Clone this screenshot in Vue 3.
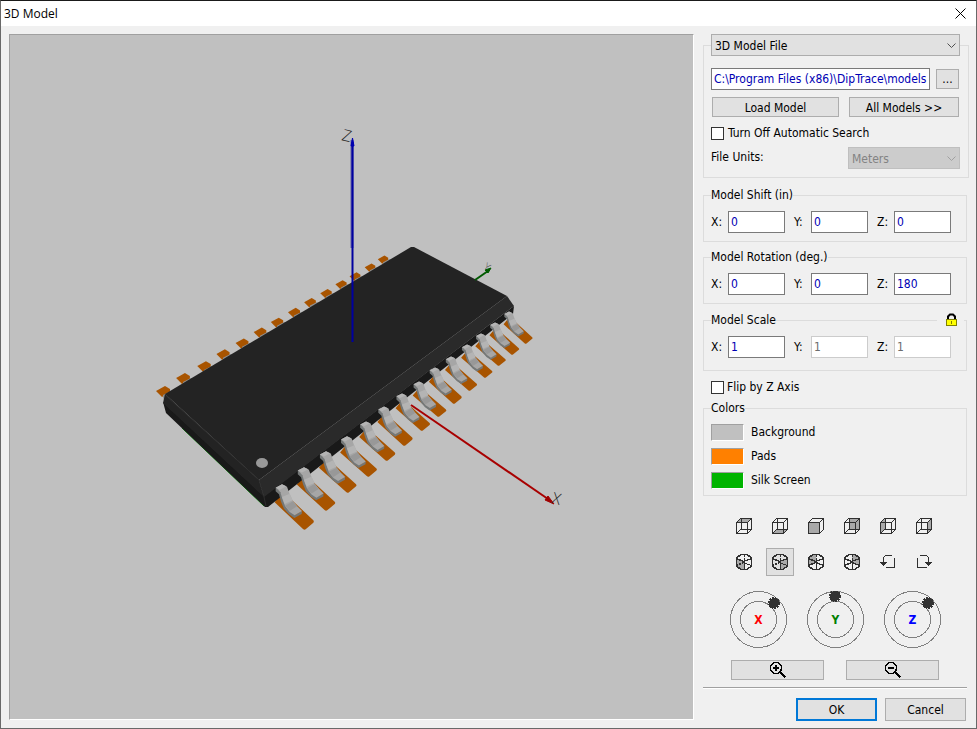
<script setup>
import { ref, reactive } from 'vue'

const source = ref('file')
const path = ref('C:\\Program Files (x86)\\DipTrace\\models3d\\so-28.wrl')
const noSearch = ref(false)
const units = ref('m')
const flipZ = ref(false)
const view = ref('iso-right')

const groups = reactive([
  { id: 'shift', title: 'Model Shift (in)', locked: false, values: { X: '0', Y: '0', Z: '0' } },
  { id: 'rotation', title: 'Model Rotation (deg.)', locked: false, values: { X: '0', Y: '0', Z: '180' } },
  { id: 'scale', title: 'Model Scale', locked: true, values: { X: '1', Y: '1', Z: '1' } },
])

const colors = [
  { name: 'Background', key: 'bg' },
  { name: 'Pads', key: 'pads' },
  { name: 'Silk Screen', key: 'silk' },
]

// Wireframe box seen from the front, one face shaded
const boxLines = 'M.5 4.5H11.5V15.5H.5ZM.5 4.5L4.5 .5H15.5L11.5 4.5M15.5 .5V11.5L11.5 15.5'
const boxHidden = 'M5.5 .5V11.5H15.5M4.5 11.5L.5 15.5'
const isoLines = 'M.5 3.5L5.5 .5H10.5L15.5 3.5V12.5L10.5 15.5H5.5L.5 12.5ZM.5 4.5L7.5 7.5L15.5 4.5M8.5 7V15.5'
const isoHidden = 'M.5 11.5L7.5 8.5L15.5 11.5'
const isoBack = 'M8.5 .5V9'

const views = [
  { id: 'top', face: '.5,4.5 4.5,.5 15.5,.5 11.5,4.5', lines: boxLines + boxHidden },
  { id: 'bottom', face: '.5,15.5 4.5,11.5 15.5,11.5 11.5,15.5', lines: boxLines + boxHidden },
  { id: 'front', face: '.5,4.5 11.5,4.5 11.5,15.5 .5,15.5', lines: boxLines },
  { id: 'back', face: '5.5,.5 15.5,.5 15.5,11.5 5.5,11.5', lines: boxLines + boxHidden },
  { id: 'left', face: '.5,4.5 5.5,.5 5.5,11.5 .5,15.5', lines: boxLines + boxHidden },
  { id: 'right', face: '11.5,4.5 15.5,.5 15.5,11.5 11.5,15.5', lines: boxLines + boxHidden },
  { id: 'iso-left', face: '.5,4.5 8,7.5 8,15.5 5.5,15.5 .5,12.5', lines: isoLines, back: true },
  { id: 'iso-right', face: '8,7.5 15.5,4.5 15.5,12.5 10.5,15.5 8,15.5', lines: isoLines, back: true },
  { id: 'iso-back-left', face: '.5,3.5 5.5,.5 8,.5 8,8.5 .5,11.5', lines: isoLines + isoHidden, back: true },
  { id: 'iso-back-right', face: '8,.5 10.5,.5 15.5,3.5 15.5,11.5 8,8.5', lines: isoLines + isoHidden, back: true },
]

const dials = [
  { axis: 'X', x: 44, y: 12 },
  { axis: 'Y', x: 28, y: 5 },
  { axis: 'Z', x: 44, y: 12 },
]

// Near side pins, nearest first: x and y of the lead top, y of the pad tip
const pins = [
  [282, 485, 530], [304, 468, 511], [326, 452, 493], [347, 437, 477],
  [366, 422, 461], [384, 407, 446], [402, 394, 431], [419, 382, 417],
  [435, 368, 404], [451, 357, 391], [467, 345, 378], [481, 334, 366],
  [495, 323, 355], [509, 312, 344],
]

const nearPads = pins.map(
  ([x, y, tip], i) => `translate(${x} ${y}) scale(${(1 - i * 0.02) / 3} ${(tip - y) / 135})`
)
const leads = pins
  .map(([x, y], i) => `translate(${x} ${y}) scale(${(1 - i * 0.02) / 3})`)
  .reverse()

// Far side pads, only their ends are visible
const farPads = [
  [163, 392], [183, 379], [204, 367], [223, 355], [242, 344], [260, 333], [277, 323],
  [294, 313], [310, 303], [326, 294], [341, 285], [355, 277], [370, 268], [383, 260],
].map(([x, y], i) => `translate(${x} ${y}) scale(${1 - i * 0.02})`)
</script>

<template>
  <div class="dialog">
    <header class="titlebar">
      <span>3D Model</span>
      <button class="close" aria-label="Close">
        <svg width="11" height="11" viewBox="0 0 11 11"><path d="M.5 .5L10.5 10.5M10.5 .5L.5 10.5" /></svg>
      </button>
    </header>

    <div class="content">
      <main class="canvas">
        <svg class="scene" viewBox="10 35 683 684">
          <g v-for="t in farPads" :key="t" :transform="t">
            <path class="pad" d="M-7 -1L2 -6L7 -3L7 0L-1 5Z" />
            <path class="far-lead" d="M0 5V3L8 -1H11V2L1 8Z" />
          </g>
          <path class="silk" d="M182 428L264 506" />
          <g v-for="t in nearPads" :key="t" :transform="t">
            <path class="pad" d="M-22 52L63 132Q67 136 71 133L94 113Q97 110 94 106L3 20Z" />
          </g>

          <path class="lower" d="M163 402L264 496L514 306L513 314L268 507L265 507L166 413Z" />
          <path class="side-left" d="M165 394L259 480L264 497L163 403Z" />
          <path class="side-right" d="M259 480L507 296L514 306L264 497Z" />
          <path class="top" d="M165 394L411 247L414 247L507 296L259 480Z" />
          <path class="edge" d="M166 396L259 480L264 497L266 506" />
          <ellipse class="mark" cx="262" cy="463" rx="6" ry="5" />

          <g v-for="t in leads" :key="t" :transform="t">
            <path class="lead-side" d="M-19 8L-7 16L2 36L11 58L22 78L40 89L60 78L59 87L37 99L21 88L6 71L-3 50L-9 28L-19 19Z" />
            <path class="lead" d="M-19 8L0 -2L15 5L22 25L32 47L45 63L60 78L38 91L23 81L9 63L1 41L-5 22L-11 15Z" />
            <path class="lead-hi" d="M-19 8L0 -2L13 4L-6 14ZM0 36L23 26L32 46L8 57Z" />
            <path class="lead-low" d="M9 62L33 49L45 64L23 78Z" />
          </g>

          <path class="axis-z-soft" d="M352 140V248" />
          <path class="axis-z" d="M352.5 142V342" />
          <path class="tip-z" d="M352.5 138L354 146H351Z" />
          <path class="axis-x" d="M411 405L548 499" />
          <path class="tip-x" d="M554 504L545 500L548 496Z" />
          <path class="axis-y" d="M475 280L488 271" />
          <path class="tip-y" d="M491 268L488 273L485 270Z" />
          <text class="axis-name" transform="translate(341 140) rotate(14)">Z</text>
          <text class="axis-name" transform="translate(551 503) rotate(14)">X</text>
          <text class="axis-name small" transform="translate(483 268) rotate(35)">Y</text>
        </svg>
      </main>

      <aside class="side">
        <fieldset class="group file">
          <legend>
            <span class="drop">
              <select v-model="source" aria-label="Model source">
                <option value="file">3D Model File</option>
              </select>
              <svg class="arrow" width="9" height="5" viewBox="0 0 9 5"><path d="M.5 .5L4.5 4.5L8.5 .5" /></svg>
            </span>
          </legend>
          <div class="row path-row">
            <input v-model="path" class="field path" type="text" aria-label="Model path" />
            <button class="btn browse" aria-label="Browse">...</button>
          </div>
          <div class="row load-row">
            <button class="btn load">Load Model</button>
            <button class="btn all">All Models &gt;&gt;</button>
          </div>
          <label class="check search"><input v-model="noSearch" type="checkbox" />Turn Off Automatic Search</label>
          <div class="row units-row">
            <label for="units">File Units:</label>
            <span class="drop units">
              <select id="units" v-model="units" disabled>
                <option value="m">Meters</option>
              </select>
              <svg class="arrow" width="9" height="5" viewBox="0 0 9 5"><path d="M.5 .5L4.5 4.5L8.5 .5" /></svg>
            </span>
          </div>
        </fieldset>

        <fieldset v-for="g in groups" :key="g.id" class="group" :class="g.id">
          <legend>{{ g.title }}</legend>
          <button v-if="g.id === 'scale'" class="lock" aria-label="Lock scale" @click="g.locked = !g.locked">
            <svg width="11" height="14" viewBox="0 0 11 14">
              <path d="M2 7V3.5L4 1.5H7L9 3.5V7" fill="none" stroke="#000" stroke-width="2" />
              <rect x=".5" y="6.5" width="10" height="6" fill="#ff0" stroke="#808000" />
              <path d="M5.5 8V11" stroke="#808000" />
            </svg>
          </button>
          <div class="axes">
            <label v-for="(v, axis) in g.values" :key="axis">
              <span>{{ axis }}:</span>
              <input v-model="g.values[axis]" class="field" type="text" :disabled="g.locked && axis !== 'X'" />
            </label>
          </div>
        </fieldset>

        <label class="check flip"><input v-model="flipZ" type="checkbox" />Flip by Z Axis</label>

        <fieldset class="group colors">
          <legend>Colors</legend>
          <div v-for="c in colors" :key="c.key" class="color">
            <button :id="c.key" class="swatch" :class="c.key"></button>
            <label :for="c.key">{{ c.name }}</label>
          </div>
        </fieldset>

        <div class="views">
          <button
            v-for="v in views"
            :key="v.id"
            class="tool"
            :class="{ active: view === v.id }"
            :aria-label="v.id"
            @click="view = v.id"
          >
            <svg width="16" height="16" viewBox="0 0 16 16">
              <polygon :points="v.face" fill="#a9a9a9" />
              <path class="wire" :d="v.lines" />
              <path v-if="v.back" class="wire dashed" :d="isoBack + isoHidden" />
            </svg>
          </button>
          <button class="tool" aria-label="Rotate left">
            <svg width="16" height="16" viewBox="0 0 16 16">
              <path d="M12 1.5H5.5L3.5 3.5V8M14.5 4V13.5H6" />
              <path class="solid" d="M0 8H7L3.5 12Z" />
            </svg>
          </button>
          <button class="tool" aria-label="Rotate right">
            <svg width="16" height="16" viewBox="0 0 16 16">
              <path d="M4 1.5H10.5L12.5 3.5V8M1.5 4V13.5H11" />
              <path class="solid" d="M9 8H16L12.5 12Z" />
            </svg>
          </button>
        </div>

        <div class="dials">
          <button v-for="d in dials" :key="d.axis" class="dial" :class="'dial-' + d.axis.toLowerCase()">
            <svg width="57" height="57" viewBox="0 0 57 57">
              <circle cx="28.5" cy="28.5" r="28" />
              <circle cx="28.5" cy="28.5" r="18" />
              <circle class="knob" :cx="d.x" :cy="d.y" r="5" />
              <text x="28.5" y="33">{{ d.axis }}</text>
            </svg>
          </button>
        </div>

        <div class="zoom">
          <button class="btn" aria-label="Zoom in">
            <svg width="16" height="16" viewBox="0 0 16 16">
              <circle cx="6" cy="6" r="5.5" />
              <path d="M3 6H9M6 3V9M10 10L15.5 15.5" />
            </svg>
          </button>
          <button class="btn" aria-label="Zoom out">
            <svg width="16" height="16" viewBox="0 0 16 16">
              <circle cx="6" cy="6" r="5.5" />
              <path d="M3 6H9M10 10L15.5 15.5" />
            </svg>
          </button>
        </div>

        <footer class="actions">
          <button class="btn ok">OK</button>
          <button class="btn">Cancel</button>
        </footer>
      </aside>
    </div>
  </div>
</template>

<style>
body {
  margin: 0;
  background: #f0f0f0;
}
</style>

<style scoped>
* {
  box-sizing: border-box;
}

.dialog {
  display: flex;
  flex-direction: column;
  min-height: 100vh;
  border: 1px solid #696969;
  border-top-color: #1a1a1a;
  background: #f0f0f0;
  color: #000;
  font: 12px/16px 'DejaVu Sans Condensed', 'DejaVu Sans', sans-serif;
}

button,
input,
select {
  margin: 0;
  padding: 0;
  border: 0;
  border-radius: 0;
  background: none;
  color: inherit;
  font: inherit;
}

svg {
  display: block;
}

.titlebar {
  display: flex;
  align-items: center;
  justify-content: space-between;
  height: 25px;
  padding: 0 10px 0 3px;
  background: #fff;
  font-family: 'Open Sans', sans-serif;
}

.close path {
  stroke: #000;
}

.content {
  display: flex;
  flex: 1;
  gap: 9px;
  padding: 8px 7px 7px 8px;
}

.canvas {
  display: flex;
  flex: 1;
  min-width: 0;
  margin-bottom: 1px;
  border: 1px solid #fff;
  border-top-color: #a0a0a0;
  border-left-color: #a0a0a0;
  background: #c0c0c0;
}

.scene {
  flex: 1;
  min-width: 0;
}

.pad {
  fill: #a85400;
}

.far-lead {
  fill: #909090;
}

.silk {
  stroke: #00a000;
}

.lower {
  fill: #191919;
}

.side-left {
  fill: #232323;
}

.side-right {
  fill: #2a2a2a;
}

.top {
  fill: #232323;
}

.edge {
  fill: none;
  stroke: #2d2d2d;
}

.mark {
  fill: #999;
}

.lead {
  fill: #a6a6a6;
}

.lead-side {
  fill: #747878;
}

.lead-hi {
  fill: #b4b4b4;
}

.lead-low {
  fill: #989898;
}

.axis-z-soft {
  stroke: #6060a8;
  stroke-width: 3;
}

.axis-z {
  stroke: #0000a0;
  stroke-width: 2;
}

.tip-z {
  fill: #0000b0;
  stroke: #0000b0;
}

.axis-x {
  stroke: #a80000;
  stroke-width: 2;
}

.tip-x {
  fill: #a00000;
  stroke: #a00000;
}

.axis-y {
  stroke: #005a00;
  stroke-width: 2;
}

.tip-y {
  fill: #005a00;
  stroke: #005a00;
}

.axis-name {
  fill: #222;
  font: 300 16px 'Open Sans', Roboto, sans-serif;
}

.axis-name.small {
  fill: #555;
  font-size: 10px;
}

.side {
  width: 266px;
}

.group {
  position: relative;
  min-width: 0;
  margin: 0 2px 0 0;
  padding: 8px 7px;
  border: 1px solid #dcdcdc;
}

.group legend {
  padding: 0;
}

.file {
  margin: 0 0 9px;
  padding-top: 12px;
  padding-right: 8px;
}

.rotation {
  margin-top: 7px;
}

.scale {
  margin-top: 8px;
  padding-bottom: 12px;
}

.row {
  display: flex;
  justify-content: space-between;
}

.drop {
  display: block;
  position: relative;
  width: 249px;
}

.drop select {
  display: block;
  width: 100%;
  height: 22px;
  padding: 1px 3px 0;
  border: 1px solid #adadad;
  background: #e1e1e1;
  appearance: none;
}

.drop select:disabled {
  border-color: #bfbfbf;
  background: #ccc;
  color: #838383;
  opacity: 1;
}

.arrow {
  position: absolute;
  top: 9px;
  right: 4px;
  fill: none;
  stroke: #505050;
  pointer-events: none;
}

.drop.units {
  width: 112px;
}

.units .arrow {
  stroke: #a0a0a0;
}

.field {
  width: 57px;
  height: 22px;
  padding: 0 2px;
  border: 1px solid #7a7a7a;
  background: #fff;
  color: #0000b4;
}

.field:disabled {
  border-color: #ccc;
  color: #6d6d6d;
}

.path-row {
  align-items: center;
  gap: 6px;
  padding-right: 1px;
}

.path {
  flex: 1;
  min-width: 0;
}

.btn {
  display: flex;
  align-items: center;
  justify-content: center;
  height: 20px;
  border: 1px solid #adadad;
  background: #e1e1e1;
}

.browse {
  width: 23px;
}

.load-row {
  gap: 10px;
  margin-top: 7px;
  padding: 0 1px;
}

.load-row .btn {
  padding-top: 1px;
}

.load {
  width: 127px;
}

.all {
  width: 110px;
}

.check {
  display: flex;
  align-items: center;
  gap: 4px;
}

.check input {
  width: 13px;
  height: 13px;
  border: 1px solid #333;
  background: #fff;
  appearance: none;
}

.check input:checked {
  background: #333;
  box-shadow: inset 0 0 0 2px #fff;
}

.search {
  margin-top: 8px;
}

.units-row {
  margin-top: 6px;
}

.units-row label {
  padding-top: 2px;
}

.lock {
  position: absolute;
  top: -15px;
  right: 2px;
  padding: 0 7px 0 9px;
  background: #f0f0f0;
}

.axes {
  display: flex;
  gap: 9px;
}

.axes label {
  display: flex;
  align-items: center;
}

.axes span {
  width: 17px;
}

.flip {
  gap: 3px;
  margin-top: 8px;
  padding-left: 8px;
}

.colors {
  margin-top: 5px;
  padding-bottom: 6px;
}

.color {
  display: flex;
  align-items: flex-start;
  gap: 7px;
}

.color + .color {
  margin-top: 7px;
}

.swatch {
  width: 33px;
  height: 17px;
  border: 1px solid #fff;
  border-top-color: #a0a0a0;
  border-left-color: #a0a0a0;
}

.swatch.bg {
  background: #c0c0c0;
}

.swatch.pads {
  background: #ff8000;
}

.swatch.silk {
  background: #00b400;
}

.views {
  display: grid;
  grid-template-columns: repeat(6, 28px);
  gap: 8px;
  margin-top: 16px;
  padding-left: 27px;
}

.tool {
  display: flex;
  align-items: center;
  justify-content: center;
  height: 28px;
  border: 1px solid transparent;
}

.tool.active {
  border-color: #adadad;
  background: #e1e1e1;
}

.tool svg {
  shape-rendering: crispEdges;
}

.tool path {
  fill: none;
  stroke: #303030;
}

.tool .wire {
  stroke-width: 1.4;
}

.tool .dashed {
  stroke-dasharray: 2 1;
}

.tool .solid {
  fill: #303030;
  stroke: none;
}

.dials {
  display: flex;
  gap: 20px;
  margin-top: 15px;
  padding-left: 27px;
}

.dial circle {
  fill: none;
  stroke: #808080;
  shape-rendering: crispEdges;
}

.dial .knob {
  fill: #333;
  stroke: #333;
  stroke-dasharray: 2 1;
  stroke-width: 2;
}

.dial text {
  font-weight: bold;
  text-anchor: middle;
}

.dial-x text {
  fill: #f00;
}

.dial-y text {
  fill: #008000;
}

.dial-z text {
  fill: #00f;
}

.zoom {
  display: flex;
  gap: 22px;
  margin-top: 12px;
  padding-left: 28px;
}

.zoom .btn {
  width: 93px;
}

.zoom svg {
  shape-rendering: crispEdges;
}

.zoom circle {
  fill: none;
  stroke: #000;
  stroke-width: 1.4;
}

.zoom path {
  fill: none;
  stroke: #000;
  stroke-width: 2;
}

.actions {
  display: flex;
  justify-content: flex-end;
  gap: 8px;
  margin: 7px 2px 0 0;
  padding: 10px 1px 0 0;
  border-top: 1px solid #a0a0a0;
  box-shadow: inset 0 1px #fff;
}

.actions .btn {
  width: 81px;
  height: 23px;
}

.actions .ok {
  border: 2px solid #0078d7;
}
</style>
